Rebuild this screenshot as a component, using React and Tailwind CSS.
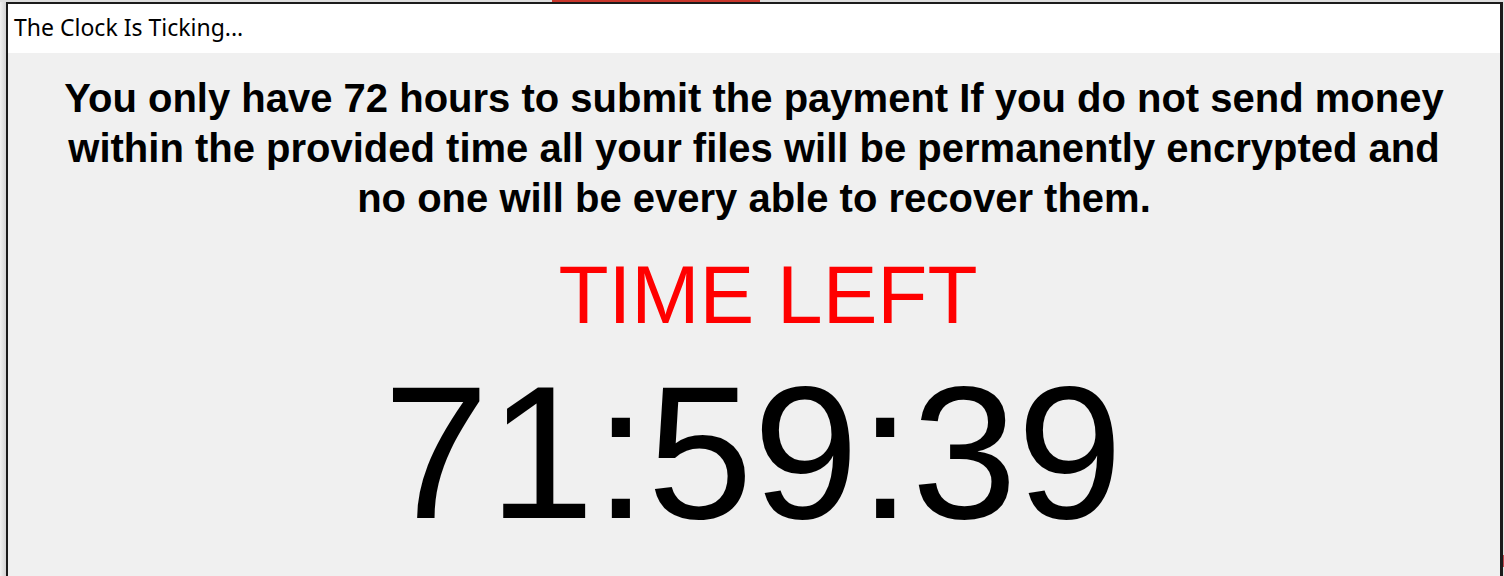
import React from "react"

function TitleBar() {
  return (
    <div className="h-[49px] bg-white flex items-center pl-[6px] pb-[3px]">
      <span
        className="text-[23px] leading-none text-black"
        style={{ fontFamily: '"Segoe UI", "Noto Sans", "Open Sans", sans-serif' }}
      >
        The Clock Is Ticking...
      </span>
    </div>
  )
}

export default function App() {
  return (
    <div className="w-[1504px] h-[576px] overflow-hidden bg-[#e4e4e4] flex flex-col">
      {/* strip of whatever sits behind the window */}
      <div className="h-[2px] flex shrink-0">
        <div className="w-[552px] bg-[#dedede]" />
        <div className="w-[208px] bg-[#c9372c]" />
        <div className="flex-1 bg-[#dedede]" />
      </div>

      <div className="flex flex-1 min-h-0">
        <div className="w-[6px] bg-gradient-to-r from-[#f2f2f2] to-[#d4d4d4]" />

        <div className="w-[1497px] flex flex-col border-t-2 border-l-2 border-r-[3px] border-[#1b1b1b] bg-[#f0f0f0]">
          <TitleBar />

          <div
            className="flex-1 flex flex-col items-center pt-[20px]"
            style={{ fontFamily: '"Liberation Sans", Arial, sans-serif' }}
          >
            <p className="text-[40px] leading-[50px] font-bold text-black text-center">
              You only have 72 hours to submit the payment If you do not send money
              <br />
              within the provided time all your files will be permanently encrypted and
              <br />
              no one will be every able to recover them.
            </p>

            <div className="mt-[31px] pl-[28px] text-[82px] leading-[82px] text-[#ff0000]">
              TIME LEFT
            </div>

            <div className="mt-[21px] pr-[2px] text-[190px] leading-[190px] text-black">
              71:59:39
            </div>
          </div>
        </div>

        <div className="flex-1 flex flex-col">
          <div className="h-[553px] bg-[#e2e2e2]" />
          <div className="h-[12px] bg-[#c0474f]" />
          <div className="flex-1 bg-[#e2e2e2]" />
        </div>
      </div>
    </div>
  )
}
